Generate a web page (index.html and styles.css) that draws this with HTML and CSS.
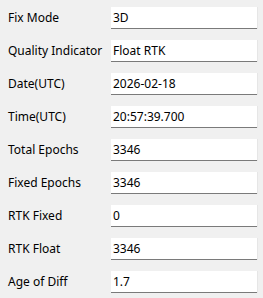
FILE: index.html
```html
<!DOCTYPE html>
<html>
<head>
<meta charset="utf-8">
<link rel="stylesheet" href="styles.css">
</head>
<body>
<div class="panel">
  <div class="row"><span class="label">Fix Mode</span><span class="field">3D</span></div>
  <div class="row"><span class="label">Quality Indicator</span><span class="field">Float RTK</span></div>
  <div class="row"><span class="label">Date(UTC)</span><span class="field">2026-02-18</span></div>
  <div class="row"><span class="label">Time(UTC)</span><span class="field">20:57:39.700</span></div>
  <div class="row"><span class="label">Total Epochs</span><span class="field">3346</span></div>
  <div class="row"><span class="label">Fixed Epochs</span><span class="field">3346</span></div>
  <div class="row"><span class="label">RTK Fixed</span><span class="field">0</span></div>
  <div class="row"><span class="label">RTK Float</span><span class="field">3346</span></div>
  <div class="row"><span class="label">Age of Diff</span><span class="field">1.7</span></div>
</div>
</body>
</html>
```
FILE: styles.css
```css
html, body {
  margin: 0;
  padding: 0;
  background: #f0f0f0;
}
body {
  font-family: "Noto Sans", "Open Sans", sans-serif;
  font-size: 12px;
  color: #000;
}
.panel {
  display: flex;
  flex-direction: column;
  gap: 11px;
  padding: 7px 0 0 8px;
}
.row {
  display: grid;
  grid-template-columns: 103px 146px;
  align-items: center;
  height: 22px;
}
.label {
  line-height: 22px;
}
.field {
  box-sizing: border-box;
  height: 22px;
  background: #fff;
  border-bottom: 1px solid #7a7a7a;
  box-shadow: 1px 0 0 #e6e6e6;
  padding-left: 2px;
  line-height: 21px;
}
```
